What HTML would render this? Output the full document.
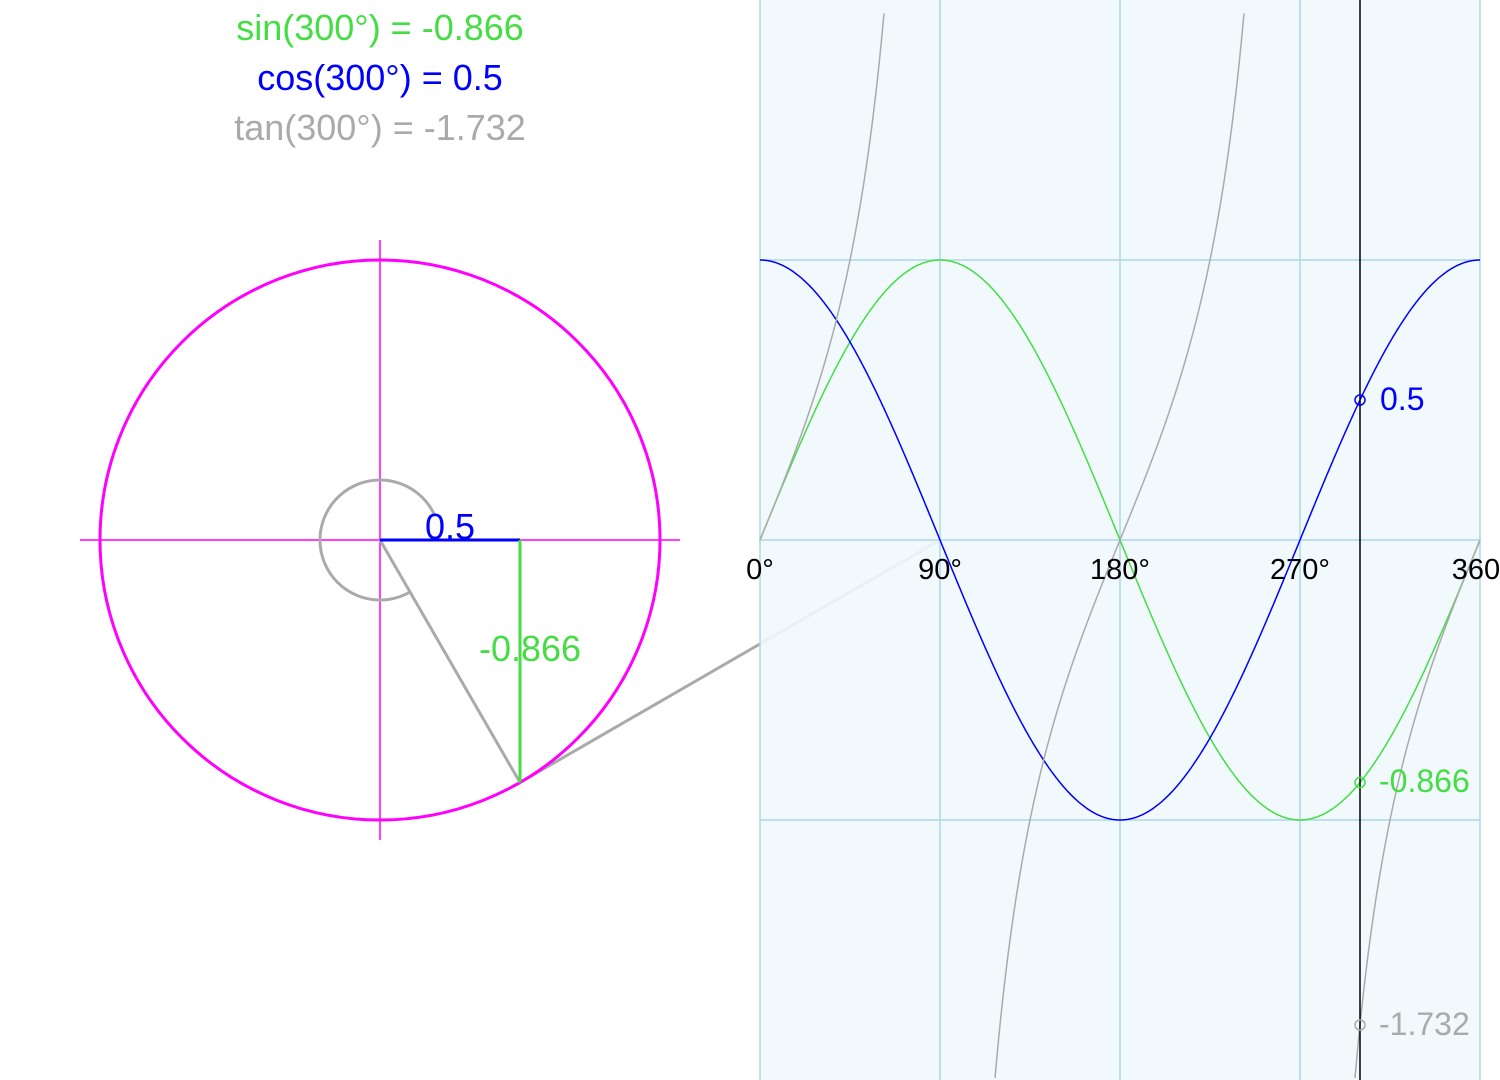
<!DOCTYPE html>
<html><head><meta charset="utf-8"><style>
html,body{margin:0;padding:0;background:#fff;width:1500px;height:1080px;overflow:hidden}
svg{display:block;font-family:"Liberation Sans",Arial,sans-serif}
</style></head><body>
<svg id="s" width="1500" height="1080" viewBox="0 0 1500 1080">
<line x1="520" y1="782.5" x2="940" y2="540" stroke="#aaa" stroke-width="3"/>
<rect x="760" y="0" width="720" height="1080" fill="rgb(240,248,252)" fill-opacity="0.9"/>
<g stroke="#add8e6" stroke-width="1.5">
<line x1="760" y1="0" x2="760" y2="1080"/><line x1="940" y1="0" x2="940" y2="1080"/>
<line x1="1120" y1="0" x2="1120" y2="1080"/><line x1="1300" y1="0" x2="1300" y2="1080"/>
<line x1="1480" y1="0" x2="1480" y2="1080"/>
<line x1="760" y1="260" x2="1480" y2="260"/><line x1="760" y1="540" x2="1480" y2="540"/>
<line x1="760" y1="820" x2="1480" y2="820"/>
</g>
<g id="curves" fill="none" stroke-width="1.5"></g>
<line x1="1360" y1="0" x2="1360" y2="1080" stroke="#000" stroke-width="1.5"/>
<g font-size="29" fill="#000" text-anchor="middle">
<text x="760" y="579">0°</text><text x="940" y="579">90°</text><text x="1120" y="579">180°</text><text x="1300" y="579">270°</text><text x="1476" y="579">360</text>
</g>
<g fill="none" stroke-width="1.5">
<circle cx="1360" cy="400" r="5" stroke="#0000ff"/>
<circle cx="1360" cy="782.5" r="5" stroke="#44dd44"/>
<circle cx="1360" cy="1025" r="5" stroke="#aaa"/>
</g>
<g font-size="32">
<text x="1380" y="410" fill="#0000ff">0.5</text>
<text x="1379" y="792" fill="#44dd44">-0.866</text>
<text x="1379" y="1035" fill="#aaa">-1.732</text>
</g>
<g stroke="#ff00ff" stroke-width="1.5"><line x1="80" y1="540" x2="680" y2="540"/><line x1="380" y1="240" x2="380" y2="840"/></g>
<circle cx="380" cy="540" r="280" fill="none" stroke="#ff00ff" stroke-width="3"/>
<path d="M434.8 515.6 A60 60 0 1 0 410 592" fill="none" stroke="#aaa" stroke-width="3"/>
<line x1="380" y1="540" x2="520" y2="782.5" stroke="#aaa" stroke-width="3"/>
<line x1="380" y1="540" x2="520" y2="540" stroke="#0000ff" stroke-width="3"/>
<line x1="520" y1="540" x2="520" y2="782.5" stroke="#44dd44" stroke-width="3"/>
<text x="450" y="539" font-size="36" fill="#0000ff" text-anchor="middle">0.5</text>
<text x="530" y="661" font-size="36" fill="#44dd44" text-anchor="middle">-0.866</text>
<g font-size="36" text-anchor="middle">
<text x="380" y="40" fill="#44dd44">sin(300°) = -0.866</text>
<text x="380" y="90" fill="#0000ff">cos(300°) = 0.5</text>
<text x="380" y="140" fill="#aaa">tan(300°) = -1.732</text>
</g>
</svg>
<script>
var g=document.getElementById('curves');
function mk(f,col,lo,hi){var d='';for(var a=lo;a<=hi+1e-9;a+=0.5){var r=a*Math.PI/180;var y=540-280*f(r);d+=(d?'L':'M')+(760+2*a).toFixed(1)+' '+y.toFixed(1);}
var p=document.createElementNS('http://www.w3.org/2000/svg','path');p.setAttribute('d',d);p.setAttribute('stroke',col);g.appendChild(p);}
mk(Math.sin,'#44dd44',0,360);mk(Math.cos,'#0000ff',0,360);
mk(Math.tan,'#aaa',0,62);mk(Math.tan,'#aaa',117.5,242);mk(Math.tan,'#aaa',297.5,360);
</script>
</body></html>
